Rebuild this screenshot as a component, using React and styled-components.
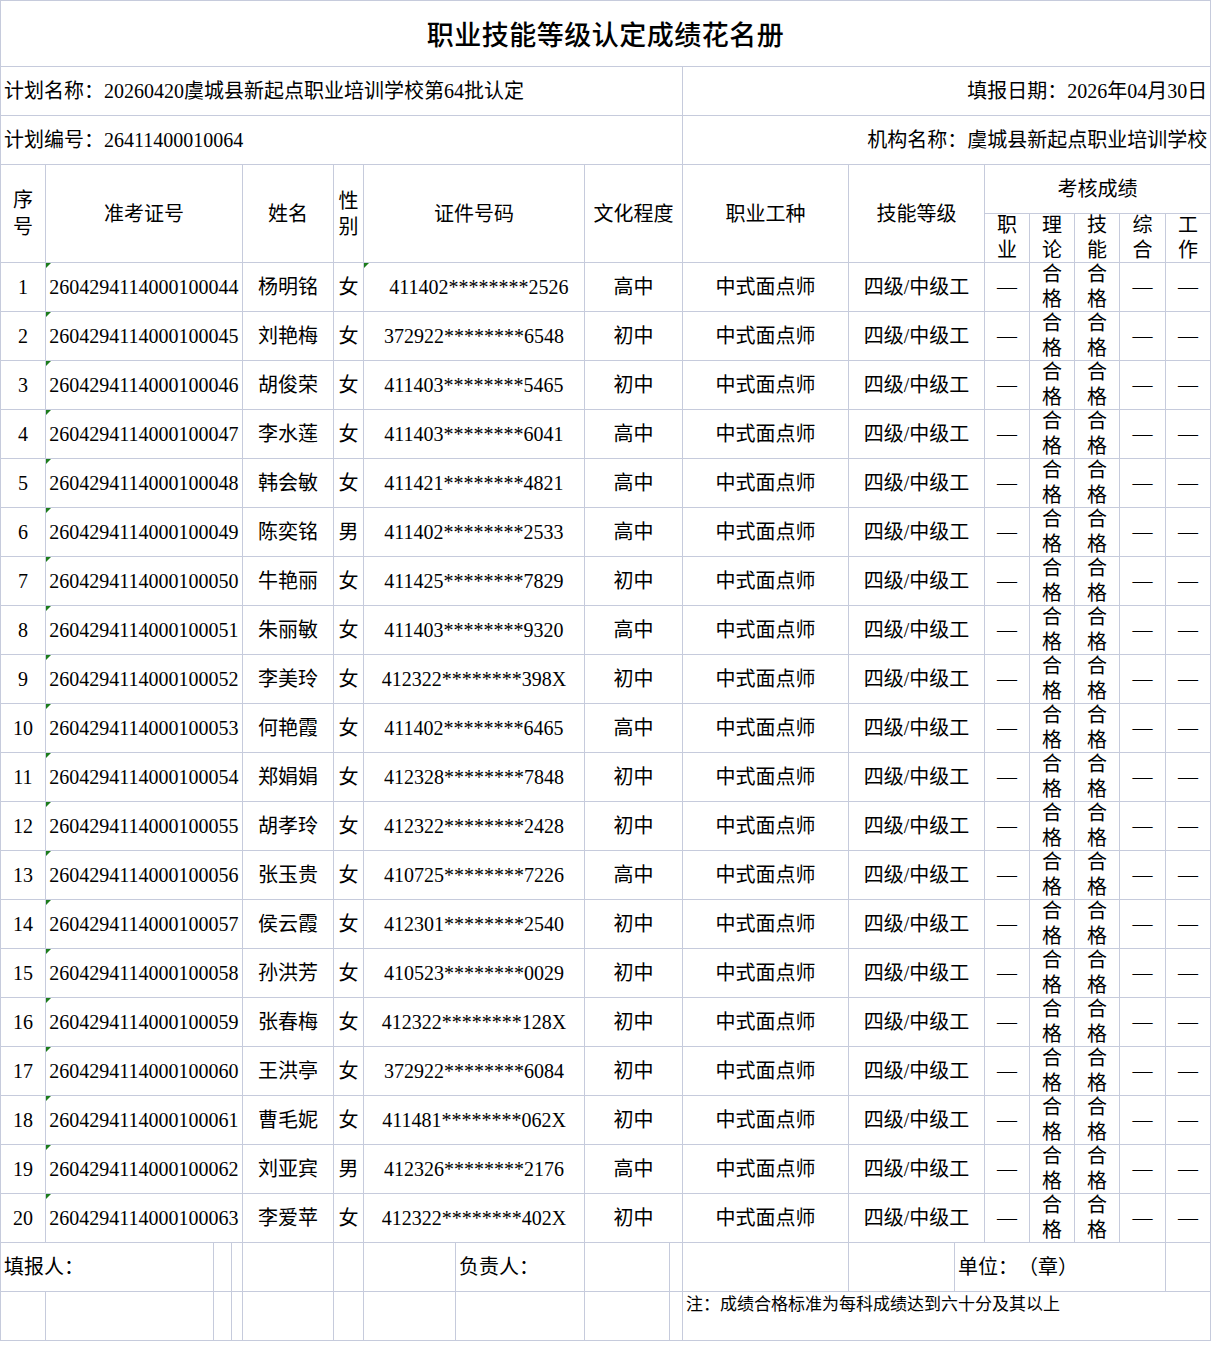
import React from "react";
import styled, { createGlobalStyle, css } from "styled-components";

const GlobalStyle = createGlobalStyle`
  html, body {
    margin: 0;
    padding: 0;
    background: #ffffff;
  }
  body {
    font-family: "Liberation Serif", "Noto Sans CJK SC", serif;
    color: #000000;
    text-spacing-trim: space-all;
  }
`;

// column widths taken from the sheet grid (sum = 1210)
const colWidths = [45, 168, 18, 11, 91, 30, 92, 129, 85, 13, 166, 106, 30, 45, 45, 45, 46, 45];

const rows = [
  ["2604294114000100044", "杨明铭", "女", "411402********2526", "高中"],
  ["2604294114000100045", "刘艳梅", "女", "372922********6548", "初中"],
  ["2604294114000100046", "胡俊荣", "女", "411403********5465", "初中"],
  ["2604294114000100047", "李水莲", "女", "411403********6041", "高中"],
  ["2604294114000100048", "韩会敏", "女", "411421********4821", "高中"],
  ["2604294114000100049", "陈奕铭", "男", "411402********2533", "高中"],
  ["2604294114000100050", "牛艳丽", "女", "411425********7829", "初中"],
  ["2604294114000100051", "朱丽敏", "女", "411403********9320", "高中"],
  ["2604294114000100052", "李美玲", "女", "412322********398X", "初中"],
  ["2604294114000100053", "何艳霞", "女", "411402********6465", "高中"],
  ["2604294114000100054", "郑娟娟", "女", "412328********7848", "初中"],
  ["2604294114000100055", "胡孝玲", "女", "412322********2428", "初中"],
  ["2604294114000100056", "张玉贵", "女", "410725********7226", "高中"],
  ["2604294114000100057", "侯云霞", "女", "412301********2540", "初中"],
  ["2604294114000100058", "孙洪芳", "女", "410523********0029", "初中"],
  ["2604294114000100059", "张春梅", "女", "412322********128X", "初中"],
  ["2604294114000100060", "王洪亭", "女", "372922********6084", "初中"],
  ["2604294114000100061", "曹毛妮", "女", "411481********062X", "初中"],
  ["2604294114000100062", "刘亚宾", "男", "412326********2176", "高中"],
  ["2604294114000100063", "李爱苹", "女", "412322********402X", "初中"],
];

const Sheet = styled.table`
  border-collapse: collapse;
  table-layout: fixed;
  width: 1211px;
  font-size: 20px;
`;

// height excludes the 1px collapsed border
const Row = styled.tr`
  height: ${(p) => (p.$h || 50) - 1}px;
`;

const Cell = styled.td`
  border: 1px solid #c6cbdc;
  padding: 0 3px;
  text-align: ${(p) => p.$align || "center"};
  vertical-align: ${(p) => p.$valign || "middle"};
  white-space: nowrap;
  overflow: hidden;
  position: relative;
  line-height: 24px;

  ${(p) =>
    p.$flag &&
    css`
      &::before {
        content: "";
        position: absolute;
        top: 0;
        left: 0;
        border-top: 5px solid #1c7c1c;
        border-right: 5px solid transparent;
      }
    `}
`;

// two stacked characters inside a narrow cell, clipped to the row
const Stack = styled.div`
  height: ${(p) => p.$h || 48}px;
  display: flex;
  flex-direction: column;
  justify-content: center;
  align-items: center;
  line-height: ${(p) => p.$lh || 25}px;
  white-space: normal;
  word-break: break-all;
  width: 20px;
  margin: 0 auto;
`;

const Title = styled.td`
  border: 1px solid #c6cbdc;
  text-align: center;
  vertical-align: middle;
  font-family: "Noto Sans CJK SC", sans-serif;
  font-size: 27px;
  font-weight: 500;
  letter-spacing: 0.5px;
`;

const Note = styled(Cell)`
  font-size: 17px;
  line-height: 22px;
  padding: 0 3px;
  font-family: "Noto Sans CJK SC", sans-serif;
`;

const Shift = styled.span`
  padding-left: ${(p) => p.$by || 0}px;
`;

function ScoreCells() {
  return (
    <>
      <Cell>—</Cell>
      <Cell>
        <Stack>合格</Stack>
      </Cell>
      <Cell>
        <Stack>合格</Stack>
      </Cell>
      <Cell>—</Cell>
      <Cell>—</Cell>
    </>
  );
}

export default function App() {
  return (
    <>
      <GlobalStyle />
      <Sheet>
        <colgroup>
          {colWidths.map((w, i) => (
            <col key={i} style={{ width: w }} />
          ))}
        </colgroup>
        <tbody>
          <Row $h={67}>
            <Title colSpan={18}>职业技能等级认定成绩花名册</Title>
          </Row>
          <Row>
            <Cell colSpan={10} $align="left">
              计划名称：20260420虞城县新起点职业培训学校第64批认定
            </Cell>
            <Cell colSpan={8} $align="right">
              填报日期：2026年04月30日
            </Cell>
          </Row>
          <Row>
            <Cell colSpan={10} $align="left">
              计划编号：26411400010064
            </Cell>
            <Cell colSpan={8} $align="right">
              机构名称：虞城县新起点职业培训学校
            </Cell>
          </Row>
          <Row>
            <Cell rowSpan={2}>
              <Stack $lh={27} $h={60}>序号</Stack>
            </Cell>
            <Cell rowSpan={2} colSpan={3}>
              准考证号
            </Cell>
            <Cell rowSpan={2}>姓名</Cell>
            <Cell rowSpan={2}>
              <Stack $lh={26} $h={60}>性别</Stack>
            </Cell>
            <Cell rowSpan={2} colSpan={2}>
              证件号码
            </Cell>
            <Cell rowSpan={2} colSpan={2}>
              文化程度
            </Cell>
            <Cell rowSpan={2}>职业工种</Cell>
            <Cell rowSpan={2} colSpan={2}>
              技能等级
            </Cell>
            <Cell colSpan={5}>考核成绩</Cell>
          </Row>
          <Row>
            <Cell>
              <Stack>职业</Stack>
            </Cell>
            <Cell>
              <Stack>理论</Stack>
            </Cell>
            <Cell>
              <Stack>技能</Stack>
            </Cell>
            <Cell>
              <Stack>综合</Stack>
            </Cell>
            <Cell>
              <Stack>工作</Stack>
            </Cell>
          </Row>
          {rows.map(([ticket, name, sex, id, edu], i) => (
            <Row key={ticket}>
              <Cell>{i + 1}</Cell>
              <Cell colSpan={3} $flag>
                {ticket}
              </Cell>
              <Cell>{name}</Cell>
              <Cell>{sex}</Cell>
              <Cell colSpan={2} $flag={i === 0}>
                {i === 0 ? <Shift $by={10}>{id}</Shift> : id}
              </Cell>
              <Cell colSpan={2}>{edu}</Cell>
              <Cell>中式面点师</Cell>
              <Cell colSpan={2}>四级/中级工</Cell>
              <ScoreCells />
            </Row>
          ))}
          <Row>
            <Cell colSpan={2} $align="left">
              填报人：
            </Cell>
            <Cell />
            <Cell />
            <Cell />
            <Cell />
            <Cell />
            <Cell $align="left">负责人：</Cell>
            <Cell />
            <Cell />
            <Cell />
            <Cell />
            <Cell colSpan={5} $align="left">
              单位：（章）
            </Cell>
            <Cell />
          </Row>
          <Row>
            <Cell />
            <Cell />
            <Cell />
            <Cell />
            <Cell />
            <Cell />
            <Cell />
            <Cell />
            <Cell />
            <Cell />
            <Note colSpan={8} $align="left" $valign="top">
              注：成绩合格标准为每科成绩达到六十分及其以上
            </Note>
          </Row>
        </tbody>
      </Sheet>
    </>
  );
}
